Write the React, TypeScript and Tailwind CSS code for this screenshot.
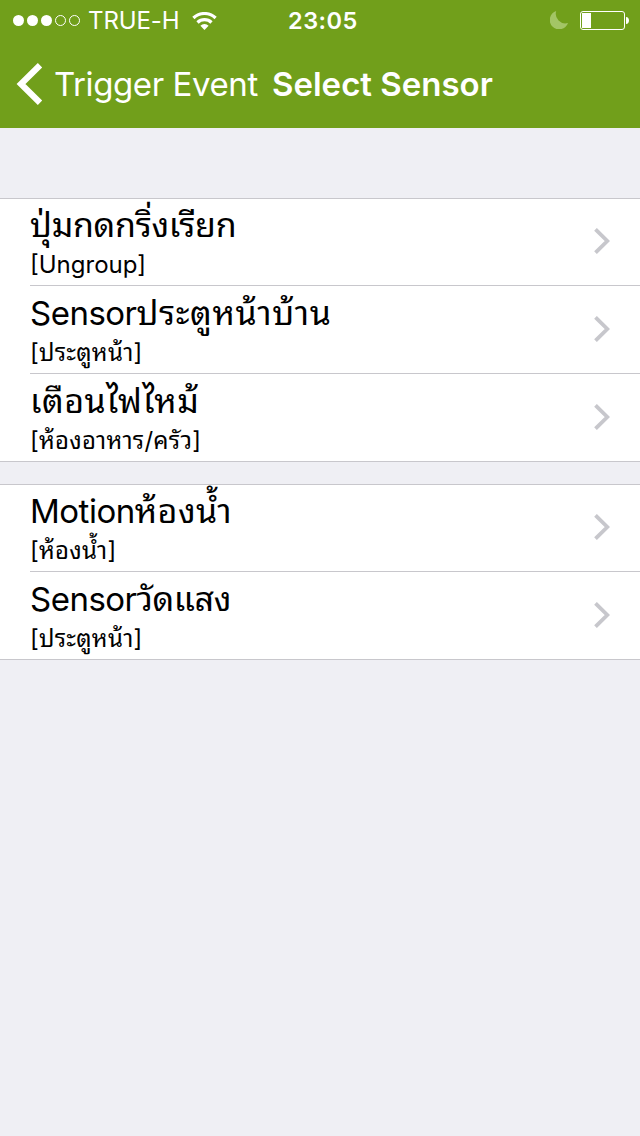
import React from 'react';

// latin prefix and Thai part are kept apart, they need different sizes
type Sensor = { latin?: string; thai: string; spacing: string; group: string };

const wired: Sensor[] = [
  { thai: 'ปุ่มกดกริ่งเรียก', spacing: 'tracking-[-0.3px]', group: '[Ungroup]' },
  { latin: 'Sensor', thai: 'ประตูหน้าบ้าน', spacing: 'tracking-[0.6px]', group: '[ประตูหน้า]' },
  { thai: 'เตือนไฟไหม้', spacing: 'tracking-[0.5px]', group: '[ห้องอาหาร/ครัว]' },
];

const others: Sensor[] = [
  { latin: 'Motion', thai: 'ห้องน้ำ', spacing: 'tracking-[0.5px]', group: '[ห้องน้ำ]' },
  { latin: 'Sensor', thai: 'วัดแสง', spacing: 'tracking-[-0.4px]', group: '[ประตูหน้า]' },
];

const StatusBar = () => (
  <div className="flex h-10 items-center">
    <svg className="ml-3 h-3 w-[70px]" viewBox="0 0 70 12" fill="#fff">
      <circle cx="6.5" cy="6.5" r="5.5" />
      <circle cx="20.5" cy="6.5" r="5.5" />
      <circle cx="34.5" cy="6.5" r="5.5" />
      <circle cx="48.5" cy="6.5" r="5" fill="none" stroke="#fff" />
      <circle cx="62.5" cy="6.5" r="5" fill="none" stroke="#fff" />
    </svg>
    <span className="ml-[6px] w-[92px] pt-0.5 text-[24px] tracking-[-0.1px] whitespace-nowrap">TRUE-H</span>
    <svg className="mt-px ml-3 h-[18px] w-[25px]" viewBox="0 0 25 18" fill="none" stroke="#fff" strokeWidth="3.2">
      <path d="M1.4 6a16 16 0 0 1 22.2 0" />
      <path d="M5.5 10.5a10 10 0 0 1 14 0" />
      <path d="M12.5 18 8.4 13.8a5.8 5.8 0 0 1 8.2 0z" fill="#fff" stroke="none" />
    </svg>
    <span className="ml-[71px] w-[70px] pt-0.5 text-[23.5px] font-semibold tracking-[0.5px] whitespace-nowrap">23:05</span>
    <svg className="ml-[192px] h-[18px] w-[18px]" viewBox="0 0 18 18" fill="#a3c566">
      <path d="M6.2 0A9.4 9.4 0 1 0 18 12 9.6 9.6 0 0 1 6.2 0z" />
    </svg>
    <svg className="ml-3 h-[19px] w-[49px]" viewBox="0 0 49 19" fill="#fff">
      <rect x=".5" y=".5" width="44" height="18" rx="2.5" fill="none" stroke="#fff" />
      <rect x="2" y="2" width="9" height="15" />
      <path d="M46 6c4 0 4 7 0 7z" />
    </svg>
  </div>
);

const NavBar = () => (
  <div className="flex h-[88px] items-center pl-4 text-[33px]">
    <svg className="h-[42px] w-[27px]" viewBox="0 0 27 42" fill="none" stroke="#fff" strokeWidth="6.2">
      <path d="M24 2.2 5 21 24 39.8" />
    </svg>
    <span className="ml-[11px] w-[203px] pt-px tracking-[-0.4px] whitespace-nowrap">Trigger Event</span>
    <span className="ml-[15px] pt-px font-semibold whitespace-nowrap">Select Sensor</span>
  </div>
);

// The first row is a pixel shorter: the list's top border is part of its 88px
const SensorRow = ({ latin, thai, spacing, group }: Sensor) => (
  <div className="group flex h-[88px] border-[#c8c7cc] pl-[30px] first:h-[87px] last:border-b">
    <div className="flex flex-1 items-end justify-between border-b border-[#c8c7cc] pr-[30px] group-last:border-b-0">
      <div className="whitespace-nowrap">
        <div className="h-[49px] leading-[54px]">
          <span className="text-[33px] tracking-[-0.5px]">{latin}</span>
          <span className={`text-[34px] ${spacing}`}>{thai}</span>
        </div>
        <div className={`h-[38px] text-[24px] leading-[36px] ${group === '[Ungroup]' ? '' : 'tracking-[0.25px]'}`}>{group}</div>
      </div>
      <svg className="mb-[31px] h-[26px] w-4" viewBox="0 0 16 26" fill="none" stroke="#c7c7cc" strokeWidth="3.8">
        <path d="M1.5 1.3 13.3 13 1.5 24.7" />
      </svg>
    </div>
  </div>
);

const SensorList = ({ items }: { items: Sensor[] }) => (
  <div className="border-t border-[#c8c7cc] bg-white">
    {items.map((s) => (
      <SensorRow key={s.thai} {...s} />
    ))}
  </div>
);

export default function App() {
  return (
    <div className="h-[1136px] w-[640px] overflow-hidden bg-[#efeff4] font-['Inter','Noto_Sans_Thai_Looped','Loma','Umpush','Garuda','Waree','Droid_Sans_Thai','FreeSans','FreeSerif','Noto_Serif_Thai',sans-serif] text-black">
      <header className="h-32 bg-[#719f1b] text-white">
        <StatusBar />
        <NavBar />
      </header>
      <main className="mt-[70px] space-y-[22px]">
        <SensorList items={wired} />
        <SensorList items={others} />
      </main>
    </div>
  );
}
